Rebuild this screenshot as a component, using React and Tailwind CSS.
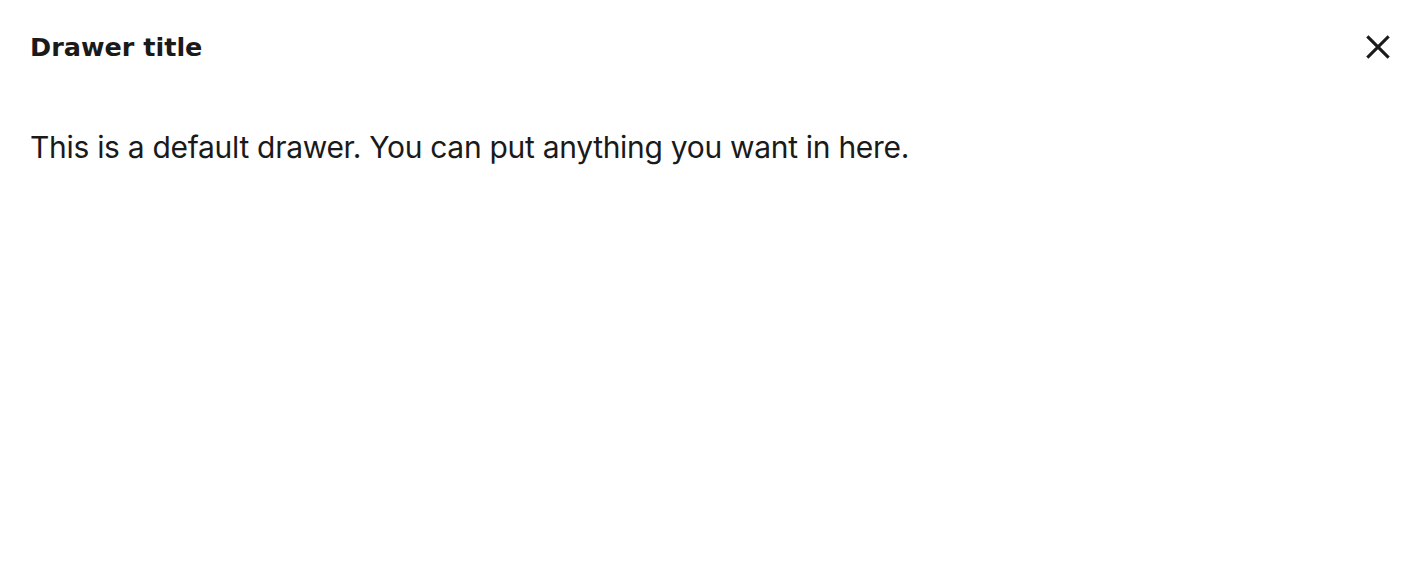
export default function App() {
  return (
    <div className="w-[1416px] h-[572px] bg-white text-[#1a1a1a]" style={{ fontFamily: "Inter, 'Noto Sans', sans-serif" }}>
      <div className="flex items-center justify-between pl-[30px] pr-[22px] pt-[27px]">
        <h2 className="text-[25.5px] leading-[40px] font-bold" style={{ fontFamily: "'DejaVu Sans', Inter, sans-serif" }}>Drawer title</h2>
        <button className="w-[32px] h-[32px] flex items-center justify-center">
          <svg width="32" height="32" viewBox="0 0 24 24" fill="none" stroke="#1a1a1a" strokeWidth="2.3" strokeLinecap="square">
            <path d="M4.8 4.8L19.2 19.2M19.2 4.8L4.8 19.2" />
          </svg>
        </button>
      </div>
      <p className="pl-[30px] mt-[60px] text-[30px] leading-[40px] tracking-[-0.3px]">
        This is a default drawer. You can put anything you want in here.
      </p>
    </div>
  );
}
